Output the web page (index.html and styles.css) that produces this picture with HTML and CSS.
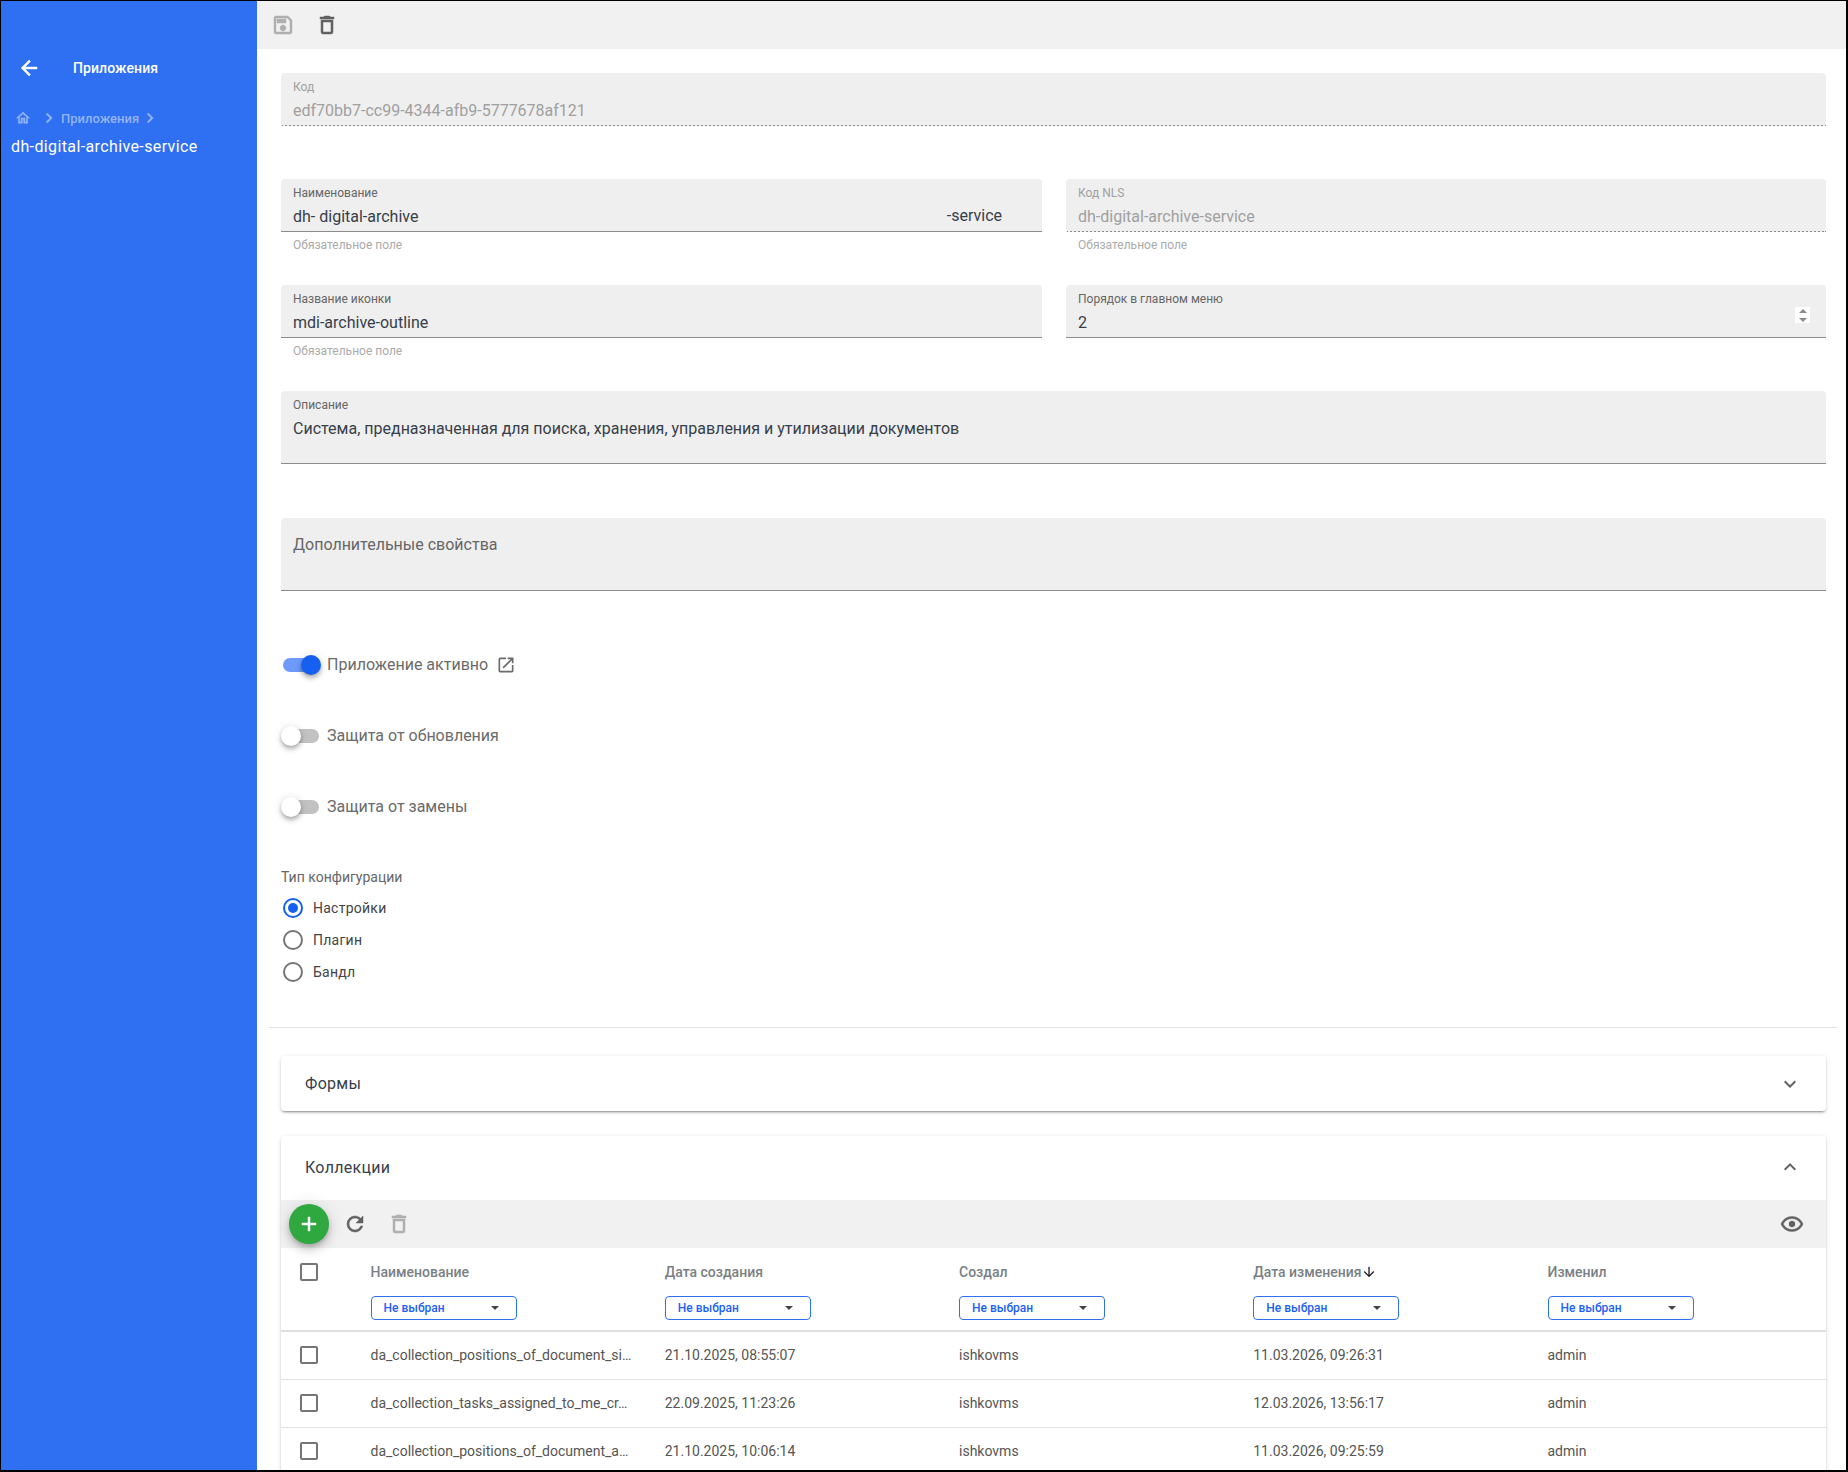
FILE: index.html
```html
<!DOCTYPE html>
<html lang="ru">
<head>
    <meta charset="UTF-8">
    <title>Приложения</title>
    <link rel="stylesheet" href="styles.css">
</head>
<body>
<div class="app">

    <!-- Left menu -->
    <aside class="sidebar">
        <div class="side-head">
            <svg class="icon back-icon" viewBox="0 0 24 24"><path d="M20,11V13H8L13.5,18.5L12.08,19.92L4.16,12L12.08,4.08L13.5,5.5L8,11H20Z"/></svg>
            <span class="side-title">Приложения</span>
        </div>
        <div class="crumbs">
            <svg class="icon crumb-home" viewBox="0 0 24 24"><path d="M12 5.69L17 10.19V18H15V12H9V18H7V10.19L12 5.69M12 3L2 12H5V20H11V14H13V20H19V12H22L12 3Z"/></svg>
            <svg class="icon crumb-chev" viewBox="0 0 24 24"><path d="M8.59,16.58L13.17,12L8.59,7.41L10,6L16,12L10,18L8.59,16.58Z"/></svg>
            <span class="crumb-text">Приложения</span>
            <svg class="icon crumb-chev" viewBox="0 0 24 24"><path d="M8.59,16.58L13.17,12L8.59,7.41L10,6L16,12L10,18L8.59,16.58Z"/></svg>
        </div>
        <div class="side-current">dh-digital-archive-service</div>
    </aside>

    <main class="main">
        <div class="top-bar">
            <svg class="icon top-icon off" viewBox="0 0 24 24"><path d="M17 3H5C3.89 3 3 3.9 3 5V19C3 20.1 3.89 21 5 21H19C20.1 21 21 20.1 21 19V7L17 3M19 19H5V5H16.17L19 7.83V19M12 12C10.34 12 9 13.34 9 15S10.34 18 12 18 15 16.66 15 15 13.66 12 12 12M6 6H15V10H6V6Z"/></svg>
            <svg class="icon top-icon" viewBox="0 0 24 24"><path d="M6,19A2,2 0 0,0 8,21H16A2,2 0 0,0 18,19V7H6V19M8,9H16V19H8V9M15.5,4L14.5,3H9.5L8.5,4H5V6H19V4H15.5Z"/></svg>
        </div>

        <div class="content">
            <div class="field disabled">
                <label>Код</label>
                <div class="value">edf70bb7-cc99-4344-afb9-5777678af121</div>
            </div>

            <div class="two-cols">
                <div class="field">
                    <label>Наименование</label>
                    <div class="value split"><span>dh- digital-archive</span><span class="suffix">-service</span></div>
                    <div class="hint">Обязательное поле</div>
                </div>
                <div class="field disabled">
                    <label>Код NLS</label>
                    <div class="value">dh-digital-archive-service</div>
                    <div class="hint">Обязательное поле</div>
                </div>
                <div class="field">
                    <label>Название иконки</label>
                    <div class="value">mdi-archive-outline</div>
                    <div class="hint">Обязательное поле</div>
                </div>
                <div class="field">
                    <label>Порядок в главном меню</label>
                    <div class="value">2</div>
                    <div class="spinner"><i class="up"></i><i class="down"></i></div>
                </div>
            </div>

            <div class="field tall">
                <label>Описание</label>
                <div class="value">Система, предназначенная для поиска, хранения, управления и утилизации документов</div>
            </div>

            <div class="field tall empty">
                <div class="placeholder">Дополнительные свойства</div>
            </div>

            <div class="toggles">
                <div class="toggle-row on">
                    <span class="switch"></span>
                    <span>Приложение активно</span>
                    <svg class="icon link-icon" viewBox="0 0 24 24"><path d="M14,3V5H17.59L7.76,14.83L9.17,16.24L19,6.41V10H21V3M19,19H5V5H12V3H5C3.89,3 3,3.9 3,5V19A2,2 0 0,0 5,21H19A2,2 0 0,0 21,19V12H19V19Z"/></svg>
                </div>
                <div class="toggle-row">
                    <span class="switch"></span>
                    <span>Защита от обновления</span>
                </div>
                <div class="toggle-row">
                    <span class="switch"></span>
                    <span>Защита от замены</span>
                </div>
            </div>

            <div class="radio-title">Тип конфигурации</div>
            <div class="radio-row checked"><span class="radio"></span>Настройки</div>
            <div class="radio-row"><span class="radio"></span>Плагин</div>
            <div class="radio-row"><span class="radio"></span>Бандл</div>

            <hr class="divider">

            <section class="panel closed">
                <div class="panel-head">
                    <span>Формы</span>
                    <svg class="icon panel-chev" viewBox="0 0 24 24"><path d="M7.41,8.58L12,13.17L16.59,8.58L18,10L12,16L6,10L7.41,8.58Z"/></svg>
                </div>
            </section>

            <section class="panel">
                <div class="panel-head">
                    <span>Коллекции</span>
                    <svg class="icon panel-chev" viewBox="0 0 24 24"><path d="M7.41,15.41L12,10.83L16.59,15.41L18,14L12,8L6,14L7.41,15.41Z"/></svg>
                </div>
                <div class="table-bar">
                    <button class="fab"><svg class="icon" viewBox="0 0 24 24"><path d="M19,13H13V19H11V13H5V11H11V5H13V11H19V13Z"/></svg></button>
                    <svg class="icon bar-icon" viewBox="0 0 24 24"><path d="M17.65,6.35C16.2,4.9 14.21,4 12,4A8,8 0 0,0 4,12A8,8 0 0,0 12,20C15.73,20 18.84,17.45 19.73,14H17.65C16.83,16.33 14.61,18 12,18A6,6 0 0,1 6,12A6,6 0 0,1 12,6C13.66,6 15.14,6.69 16.22,7.78L13,11H20V4L17.65,6.35Z"/></svg>
                    <svg class="icon bar-icon off" viewBox="0 0 24 24"><path d="M6,19A2,2 0 0,0 8,21H16A2,2 0 0,0 18,19V7H6V19M8,9H16V19H8V9M15.5,4L14.5,3H9.5L8.5,4H5V6H19V4H15.5Z"/></svg>
                    <svg class="icon bar-icon eye" viewBox="0 0 24 24"><path d="M12,9A3,3 0 0,1 15,12A3,3 0 0,1 12,15A3,3 0 0,1 9,12A3,3 0 0,1 12,9M12,4.5C17,4.5 21.27,7.61 23,12C21.27,16.39 17,19.5 12,19.5C7,19.5 2.73,16.39 1,12C2.73,7.61 7,4.5 12,4.5M3.18,12C4.83,15.36 8.24,17.5 12,17.5C15.76,17.5 19.17,15.36 20.82,12C19.17,8.64 15.76,6.5 12,6.5C8.24,6.5 4.83,8.64 3.18,12Z"/></svg>
                </div>

                <div class="grid-head">
                    <div class="cell-check"><span class="check"></span></div>
                    <div class="head-cell"><div class="head-name">Наименование</div><div class="filter">Не выбран<i class="caret"></i></div></div>
                    <div class="head-cell"><div class="head-name">Дата создания</div><div class="filter">Не выбран<i class="caret"></i></div></div>
                    <div class="head-cell"><div class="head-name">Создал</div><div class="filter">Не выбран<i class="caret"></i></div></div>
                    <div class="head-cell"><div class="head-name">Дата изменения<svg class="icon sort-icon" viewBox="0 0 24 24"><path d="M11,4H13V16L18.5,10.5L19.92,11.92L12,19.84L4.08,11.92L5.5,10.5L11,16V4Z"/></svg></div><div class="filter">Не выбран<i class="caret"></i></div></div>
                    <div class="head-cell"><div class="head-name">Изменил</div><div class="filter">Не выбран<i class="caret"></i></div></div>
                </div>

                <div class="grid-row">
                    <div class="cell-check"><span class="check"></span></div>
                    <div>da_collection_positions_of_document_si…</div>
                    <div>21.10.2025, 08:55:07</div>
                    <div>ishkovms</div>
                    <div>11.03.2026, 09:26:31</div>
                    <div>admin</div>
                </div>
                <div class="grid-row">
                    <div class="cell-check"><span class="check"></span></div>
                    <div>da_collection_tasks_assigned_to_me_cr…</div>
                    <div>22.09.2025, 11:23:26</div>
                    <div>ishkovms</div>
                    <div>12.03.2026, 13:56:17</div>
                    <div>admin</div>
                </div>
                <div class="grid-row">
                    <div class="cell-check"><span class="check"></span></div>
                    <div>da_collection_positions_of_document_a…</div>
                    <div>21.10.2025, 10:06:14</div>
                    <div>ishkovms</div>
                    <div>11.03.2026, 09:25:59</div>
                    <div>admin</div>
                </div>
            </section>
        </div>
    </main>
</div>
</body>
</html>
```

FILE: styles.css
```css
* {
    box-sizing: border-box;
}
body {
    margin: 0;
    font-family: Roboto, "Noto Sans", sans-serif;
    color: #333;
    background: #fff;
}
.app {
    display: flex;
    width: 1848px;
    height: 1472px;
    overflow: hidden;
    border-style: solid;
    border-color: #000;
    border-width: 1px 2px 2px 1px;
}
.icon {
    display: block;
    fill: currentColor;
    flex-shrink: 0;
}

/* sidebar */
.sidebar {
    width: 256px;
    flex-shrink: 0;
    background: #2f6ff2;
    color: #fff;
}
.side-head {
    display: flex;
    align-items: center;
    height: 24px;
    margin-top: 55px;
    padding-left: 16px;
}
.back-icon {
    width: 24px;
    height: 24px;
    stroke: currentColor;
    stroke-width: 0.5;
}
.side-title {
    margin-left: 32px;
    font-size: 14px;
    font-weight: 500;
    letter-spacing: 0.1px;
}
.crumbs {
    display: flex;
    align-items: center;
    height: 16px;
    margin-top: 30px;
    padding-left: 14px;
    color: #93b4f8;
}
.crumb-home {
    width: 16px;
    height: 16px;
    stroke: currentColor;
    stroke-width: 0.7;
}
.crumb-chev {
    width: 20px;
    height: 20px;
    stroke: currentColor;
    stroke-width: 0.5;
}
.crumb-home + .crumb-chev {
    margin-left: 8px;
}
.crumb-text {
    margin: 0 1px 0 2px;
    font-size: 13px;
    font-weight: 500;
}
.side-current {
    margin-top: 9px;
    padding-left: 10px;
    font-size: 16px;
    line-height: 24px;
    letter-spacing: 0.38px;
}

/* main part */
.main {
    flex: 1;
    min-width: 0;
}
.top-bar {
    display: flex;
    align-items: center;
    gap: 20px;
    height: 48px;
    padding-left: 14px;
    background: #f1f1f1;
    color: #616161;
}
.top-icon {
    width: 24px;
    height: 24px;
    stroke: currentColor;
    stroke-width: 0.5;
}
.off {
    opacity: 0.45;
}
.content {
    padding: 24px 20px 0 24px;
}

/* fields */
.field {
    position: relative;
    height: 53px;
    margin-bottom: 53px;
    padding: 7px 12px 0;
    background: #efefef;
    border-bottom: 1px solid #8c8c8c;
    border-radius: 4px 4px 0 0;
}
.field label {
    display: block;
    font-size: 12px;
    line-height: 14px;
    color: #666;
}
.field .value {
    margin-top: 5px;
    font-size: 16px;
    line-height: 24px;
    color: #37404a;
}
.field.disabled {
    border-image: repeating-linear-gradient(to right, #8c8c8c 0, #8c8c8c 2px, transparent 2px, transparent 4px) 1 repeat;
}
.field.disabled label {
    color: #a0a0a0;
}
.field.disabled .value {
    color: #a0a0a0;
}
.split {
    display: flex;
    justify-content: space-between;
    padding-right: 28px;
}
.suffix {
    margin-top: -1px;
}
.hint {
    position: absolute;
    left: 12px;
    top: 59px;
    font-size: 12px;
    line-height: 14px;
    color: #aaa;
}
.two-cols {
    display: grid;
    grid-template-columns: 761px 760px;
    column-gap: 24px;
}
.spinner {
    position: absolute;
    right: 16px;
    top: 22px;
    display: flex;
    flex-direction: column;
    align-items: center;
    justify-content: center;
    gap: 5px;
    width: 15px;
    height: 16px;
    background: #fff;
}
.spinner i {
    width: 0;
    height: 0;
    border-left: 4px solid transparent;
    border-right: 4px solid transparent;
}
.spinner .up {
    border-bottom: 4px solid #8a8a8a;
}
.spinner .down {
    border-top: 4px solid #8a8a8a;
}
.field.tall {
    height: 73px;
    margin-bottom: 54px;
}
.placeholder {
    margin-top: 8px;
    font-size: 16px;
    line-height: 24px;
    color: #666;
}
.field.empty {
    margin-bottom: 38px;
}

/* switches */
.toggle-row {
    display: flex;
    align-items: center;
    height: 71px;
    padding-left: 2px;
    font-size: 16px;
    color: #6b6b6b;
}
.switch {
    position: relative;
    width: 36px;
    height: 14px;
    margin-right: 8px;
    background: #c2c2c2;
    border-radius: 7px;
}
.switch::after {
    content: "";
    position: absolute;
    left: -2px;
    top: -3px;
    width: 20px;
    height: 20px;
    background: #fff;
    border-radius: 50%;
    box-shadow: 0 2px 4px -1px rgba(0, 0, 0, 0.25), 0 4px 5px rgba(0, 0, 0, 0.14), 0 1px 10px rgba(0, 0, 0, 0.12);
}
.on .switch {
    background: #6e9bfb;
}
.on .switch::after {
    left: 18px;
    background: #1560f0;
}
.link-icon {
    width: 20px;
    height: 20px;
    margin-left: 8px;
}

/* radio buttons */
.radio-title {
    margin-top: 25px;
    font-size: 14px;
    line-height: 20px;
    color: #666;
}
.radio-row {
    display: flex;
    align-items: center;
    height: 32px;
    padding-left: 2px;
    font-size: 14px;
    letter-spacing: 0.25px;
    color: #444;
}
.radio-title + .radio-row {
    margin-top: 5px;
}
.radio {
    display: flex;
    align-items: center;
    justify-content: center;
    width: 20px;
    height: 20px;
    margin-right: 10px;
    border: 2px solid #757575;
    border-radius: 50%;
}
.checked .radio {
    border-color: #1560f0;
}
.checked .radio::after {
    content: "";
    width: 10px;
    height: 10px;
    background: #1560f0;
    border-radius: 50%;
}
.divider {
    height: 1px;
    margin: 39px -11px 28px -12px;
    background: #e0e0e0;
    border: 0;
}

/* panels */
.panel {
    margin-bottom: 24px;
    background: #fff;
    border-radius: 4px;
    box-shadow: 0 3px 1px -2px rgba(0, 0, 0, 0.2), 0 2px 2px rgba(0, 0, 0, 0.14), 0 1px 5px rgba(0, 0, 0, 0.12);
}
.panel.closed {
    height: 55px;
    margin-bottom: 25px;
}
.panel-head {
    display: flex;
    align-items: center;
    justify-content: space-between;
    height: 55px;
    padding: 0 24px;
    font-size: 16px;
    letter-spacing: 0.3px;
    color: #37404a;
}
.panel:not(.closed) .panel-head {
    height: 64px;
    padding-bottom: 2px;
}
.panel-chev {
    width: 24px;
    height: 24px;
    color: #616161;
}
.table-bar {
    display: flex;
    align-items: center;
    height: 48px;
    padding-left: 8px;
    background: #f1f1f1;
    color: #616161;
}
.fab {
    display: flex;
    align-items: center;
    justify-content: center;
    width: 40px;
    height: 40px;
    padding: 0;
    color: #fff;
    background: #2ea83f;
    border: 0;
    border-radius: 50%;
    box-shadow: 0 3px 5px -1px rgba(0, 0, 0, 0.2), 0 6px 10px rgba(0, 0, 0, 0.14), 0 1px 18px rgba(0, 0, 0, 0.12);
}
.fab .icon {
    width: 24px;
    height: 24px;
    stroke: currentColor;
    stroke-width: 0.5;
}
.bar-icon {
    width: 24px;
    height: 24px;
    margin-left: 14px;
    stroke: currentColor;
    stroke-width: 0.5;
}
.bar-icon:nth-of-type(2) {
    margin-left: 20px;
}
.bar-icon.eye {
    margin-left: auto;
    margin-right: 22px;
}

/* table */
.grid-head, .grid-row {
    display: grid;
    grid-template-columns: 89.5px 294.25px 294.25px 294.25px 294.25px 1fr;
}
.grid-head {
    height: 84px;
    border-bottom: 2px solid #e0e0e0;
}
.cell-check {
    display: flex;
    padding-left: 19px;
}
.grid-head .cell-check {
    padding-top: 15px;
}
.check {
    display: block;
    width: 18px;
    height: 18px;
    border: 2px solid #757575;
    border-radius: 2px;
}
.head-name {
    display: flex;
    align-items: center;
    height: 20px;
    margin-top: 14px;
    font-size: 14px;
    font-weight: 500;
    color: #7a7f85;
}
.sort-icon {
    width: 16px;
    height: 16px;
    color: #222;
}
.filter {
    position: relative;
    width: 146px;
    height: 24px;
    margin-top: 14px;
    padding-left: 12px;
    font-size: 12px;
    font-weight: 500;
    line-height: 22px;
    color: #1e5ff5;
    border: 1px solid #2f6ff2;
    border-radius: 4px;
}
.caret {
    position: absolute;
    right: 17px;
    top: 9px;
    width: 0;
    height: 0;
    border-left: 4px solid transparent;
    border-right: 4px solid transparent;
    border-top: 4px solid #444;
}
.grid-row {
    align-items: center;
    height: 48px;
    padding-bottom: 2px;
    font-size: 14px;
    color: #555;
    border-bottom: 1px solid #e0e0e0;
}
```
